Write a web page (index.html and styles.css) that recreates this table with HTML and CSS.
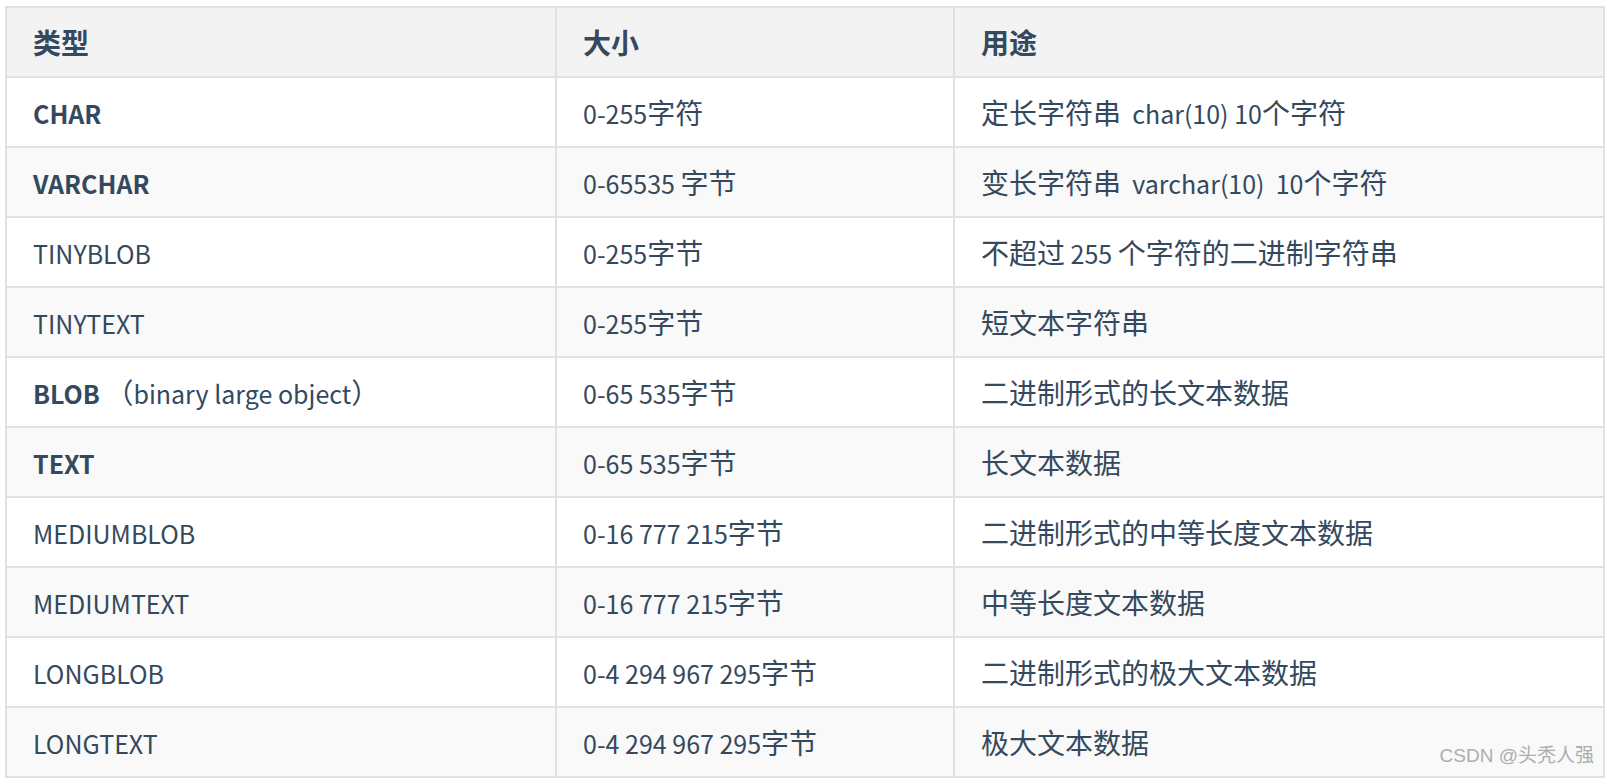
FILE: index.html
```html
<!DOCTYPE html>
<html lang="zh-CN">
<head>
<meta charset="utf-8">
<title>MySQL 字符串类型</title>
<link rel="stylesheet" href="styles.css">
</head>
<body>
<div class="page">
  <table class="types">
    <colgroup>
      <col class="c1">
      <col class="c2">
      <col class="c3">
    </colgroup>
    <thead>
      <tr><th>类型</th><th>大小</th><th>用途</th></tr>
    </thead>
    <tbody>
      <tr><td><b class="en">CHAR</b></td><td><span class="en">0-255</span>字符</td><td>定长字符串<span class="en">&nbsp; char(10) 10</span>个字符</td></tr>
      <tr><td><b class="en">VARCHAR</b></td><td><span class="en">0-65535 </span>字节</td><td>变长字符串<span class="en">&nbsp; varchar(10)&nbsp; 10</span>个字符</td></tr>
      <tr><td><span class="en">TINYBLOB</span></td><td><span class="en">0-255</span>字节</td><td>不超过<span class="en"> 255 </span>个字符的二进制字符串</td></tr>
      <tr><td><span class="en">TINYTEXT</span></td><td><span class="en">0-255</span>字节</td><td>短文本字符串</td></tr>
      <tr><td><b class="en">BLOB</b><span class="en"> </span>（<span class="en">binary large object</span>）</td><td><span class="en">0-65 535</span>字节</td><td>二进制形式的长文本数据</td></tr>
      <tr><td><b class="en">TEXT</b></td><td><span class="en">0-65 535</span>字节</td><td>长文本数据</td></tr>
      <tr><td><span class="en">MEDIUMBLOB</span></td><td><span class="en">0-16 777 215</span>字节</td><td>二进制形式的中等长度文本数据</td></tr>
      <tr><td><span class="en">MEDIUMTEXT</span></td><td><span class="en">0-16 777 215</span>字节</td><td>中等长度文本数据</td></tr>
      <tr><td><span class="en">LONGBLOB</span></td><td><span class="en">0-4 294 967 295</span>字节</td><td>二进制形式的极大文本数据</td></tr>
      <tr><td><span class="en">LONGTEXT</span></td><td><span class="en">0-4 294 967 295</span>字节</td><td>极大文本数据</td></tr>
    </tbody>
  </table>
  <div class="watermark">CSDN @头秃人强</div>
</div>
</body>
</html>
```

FILE: styles.css
```css
html, body {
  margin: 0;
  padding: 0;
  background: #ffffff;
}

.page {
  position: relative;
  width: 1610px;
  height: 784px;
  padding: 6px 0 0 5px;
  box-sizing: border-box;
}

.types {
  border-collapse: separate;
  border-spacing: 0;
  table-layout: fixed;
  width: 1600px;
  border-left: 2px solid #dfe2e5;
  border-top: 2px solid #dfe2e5;
  font-family: "Noto Sans CJK SC", "Noto Sans", sans-serif;
  font-size: 28px;
  color: #34495e;
}

.c1 { width: 550px; }
.c2 { width: 398px; }
.c3 { width: 650px; }

.types th,
.types td {
  border-right: 2px solid #dfe2e5;
  border-bottom: 2px solid #dfe2e5;
  padding: 12px 26px 12px 26px;
  line-height: 44px;
  height: 44px;
  text-align: left;
  white-space: nowrap;
  box-sizing: content-box;
}

.types th {
  font-weight: 600;
  background: #f3f3f3;
}

.en {
  font-size: 25px;
  line-height: 1;
}

.types td b {
  font-weight: 600;
}

.types tbody tr:nth-child(odd) td {
  background: #ffffff;
}

.types tbody tr:nth-child(even) td {
  background: #f9f9f9;
}

.watermark {
  position: absolute;
  right: 16px;
  top: 744px;
  font-family: "Liberation Sans", "Noto Sans CJK SC", sans-serif;
  font-size: 19px;
  line-height: 24px;
  color: #adadad;
}
```
